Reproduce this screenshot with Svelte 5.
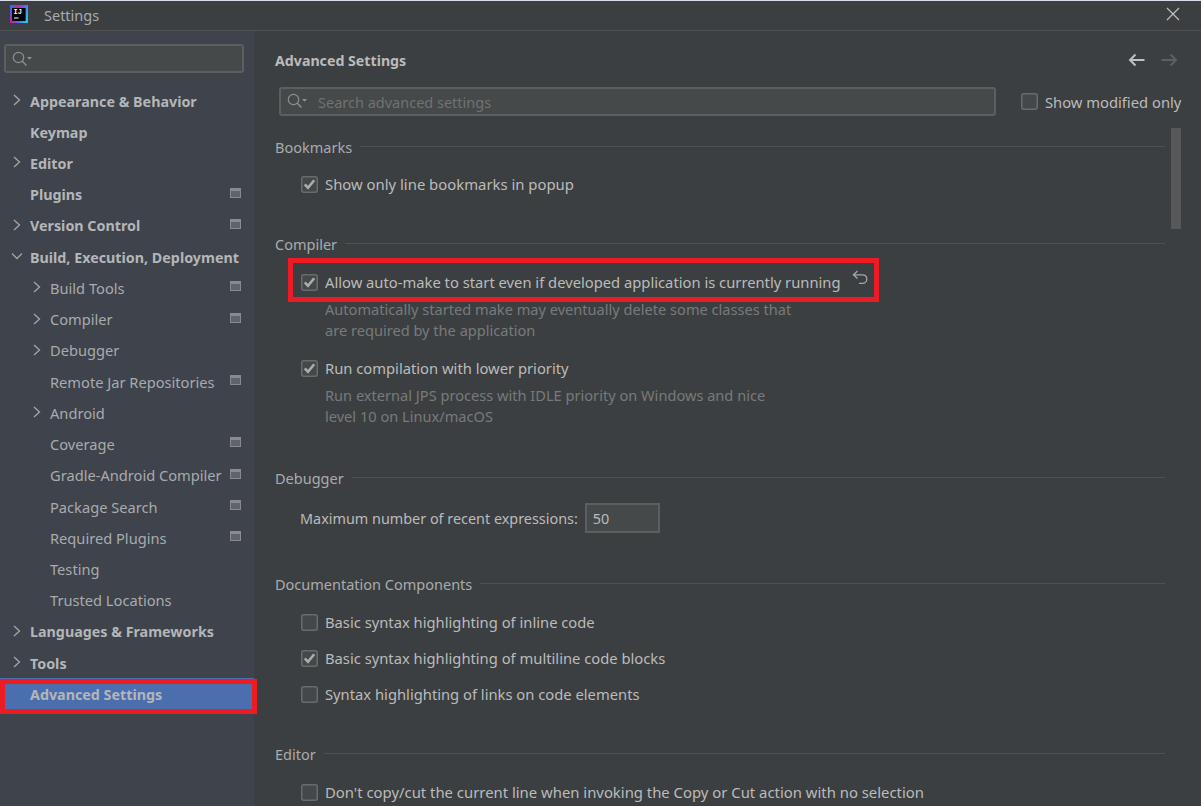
<script>
  const nav = [
    { label: 'Appearance & Behavior', bold: true, arrow: 'right' },
    { label: 'Keymap', bold: true },
    { label: 'Editor', bold: true, arrow: 'right' },
    { label: 'Plugins', bold: true, page: true },
    { label: 'Version Control', bold: true, arrow: 'right', page: true },
    { label: 'Build, Execution, Deployment', bold: true, arrow: 'down' },
    { label: 'Build Tools', arrow: 'right', page: true },
    { label: 'Compiler', arrow: 'right', page: true },
    { label: 'Debugger', arrow: 'right' },
    { label: 'Remote Jar Repositories', page: true },
    { label: 'Android', arrow: 'right' },
    { label: 'Coverage', page: true },
    { label: 'Gradle-Android Compiler', page: true },
    { label: 'Package Search', page: true },
    { label: 'Required Plugins', page: true },
    { label: 'Testing' },
    { label: 'Trusted Locations' },
    { label: 'Languages & Frameworks', bold: true, arrow: 'right' },
    { label: 'Tools', bold: true, arrow: 'right' },
    { label: 'Advanced Settings', bold: true, selected: true }
  ];
</script>

{#snippet checkbox(checked)}
  <svg class="cb" width="17" height="17" viewBox="0 0 17 17">
    <rect x="0.75" y="0.75" width="15.5" height="15.5" rx="2" fill="#43494a" stroke="#6b6b6b" stroke-width="1.5" />
    {#if checked}
      <path d="M3.8 8.3 L7 11.8 L13.2 4.2" fill="none" stroke="#acacac" stroke-width="2.6" />
    {/if}
  </svg>
{/snippet}

{#snippet magnifier()}
  <svg class="mag" width="20" height="16" viewBox="0 0 20 16">
    <circle cx="6.5" cy="6.5" r="5.2" fill="none" stroke="#8c9091" stroke-width="1.2" />
    <path d="M10.3 10.3 L14.5 14.5" stroke="#8c9091" stroke-width="1.4" />
    <path d="M15 6 H20 L17.5 8.8 Z" fill="#8c9091" />
  </svg>
{/snippet}

<div class="window">
  <header class="titlebar">
    <svg class="logo" width="18" height="18" viewBox="0 0 18 18">
      <defs>
        <linearGradient id="lg" x1="0" y1="0.2" x2="1" y2="0.6">
          <stop offset="0" stop-color="#2f6df0" />
          <stop offset="0.3" stop-color="#d0209a" />
          <stop offset="0.6" stop-color="#6f55ee" />
          <stop offset="1" stop-color="#1cc4f4" />
        </linearGradient>
      </defs>
      <rect width="18" height="18" fill="url(#lg)" />
      <rect x="2" y="3" width="13.6" height="13" fill="#000" />
      <text x="3.6" y="9" class="logo-text">IJ</text>
      <rect x="4" y="12.5" width="4.5" height="1" fill="#fff" />
    </svg>
    <span class="title">Settings</span>
    <svg class="close" width="14" height="14" viewBox="0 0 14 14">
      <path d="M1 1 L13 13 M13 1 L1 13" stroke="#c4c4c4" stroke-width="1.1" fill="none" />
    </svg>
  </header>

  <div class="body">
    <aside class="sidebar">
      <div class="side-search">{@render magnifier()}</div>
      <ul class="tree">
        {#each nav as item}
          <li class="row" class:bold={item.bold} class:child={!item.bold} class:selected={item.selected}>
            {#if item.arrow === 'right'}
              <svg class="arrow" width="8" height="12" viewBox="0 0 8 12"><path d="M1 1 L6.5 6 L1 11" fill="none" stroke="#a4a6a8" stroke-width="1.3" /></svg>
            {:else if item.arrow === 'down'}
              <svg class="arrow down" width="12" height="8" viewBox="0 0 12 8"><path d="M1 1.5 L6 6.5 L11 1.5" fill="none" stroke="#a4a6a8" stroke-width="1.3" /></svg>
            {/if}
            <span class="label">{item.label}</span>
            {#if item.page}
              <svg class="page" width="11" height="10" viewBox="0 0 11 10">
                <rect width="11" height="10" fill="#878b90" />
                <rect x="1" y="3" width="9" height="6" fill="#5f646b" />
              </svg>
            {/if}
            {#if item.selected}<span class="red-frame side-frame"></span>{/if}
          </li>
        {/each}
      </ul>
    </aside>

    <main class="main">
      <div class="head">
        <h1>Advanced Settings</h1>
        <div class="nav-arrows">
          <svg width="17" height="14" viewBox="0 0 17 14"><path d="M16.5 7 H2 M7.5 1.5 L2 7 L7.5 12.5" fill="none" stroke="#c0c0c0" stroke-width="2" /></svg>
          <svg width="17" height="14" viewBox="0 0 17 14"><path d="M0.5 7 H15 M9.5 1.5 L15 7 L9.5 12.5" fill="none" stroke="#5d5f60" stroke-width="2" /></svg>
        </div>
      </div>

      <div class="filter">
        <div class="adv-search">
          {@render magnifier()}
          <span class="placeholder">Search advanced settings</span>
        </div>
        <label class="modified">{@render checkbox(false)}<span>Show modified only</span></label>
      </div>

      <section class="bookmarks">
        <div class="sec-title"><span>Bookmarks</span><i></i></div>
        <div class="opt first">{@render checkbox(true)}<span>Show only line bookmarks in popup</span></div>
      </section>

      <section class="compiler">
        <div class="sec-title"><span>Compiler</span><i></i></div>
        <div class="opt first">
          {@render checkbox(true)}<span>Allow auto-make to start even if developed application is currently running</span>
          <svg class="reset" width="16" height="15" viewBox="0 0 16 15">
            <path d="M5.5 1 L1.5 4.8 L5.5 8.5 M1.5 4.8 H10.5 C13 4.8 14.8 6.6 14.8 9 C14.8 11.4 13 13.4 10.5 13.4 H7" fill="none" stroke="#a4a6a8" stroke-width="1.3" />
          </svg>
          <span class="red-frame opt-frame"></span>
        </div>
        <p class="desc">Automatically started make may eventually delete some classes that<br />are required by the application</p>
        <div class="opt run">{@render checkbox(true)}<span>Run compilation with lower priority</span></div>
        <p class="desc">Run external JPS process with IDLE priority on Windows and nice<br />level 10 on Linux/macOS</p>
      </section>

      <section class="debugger">
        <div class="sec-title"><span>Debugger</span><i></i></div>
        <div class="num-row"><span>Maximum number of recent expressions:</span><span class="num">50</span></div>
      </section>

      <section class="docs">
        <div class="sec-title"><span>Documentation Components</span><i></i></div>
        <div class="opt first">{@render checkbox(false)}<span>Basic syntax highlighting of inline code</span></div>
        <div class="opt next">{@render checkbox(true)}<span>Basic syntax highlighting of multiline code blocks</span></div>
        <div class="opt next">{@render checkbox(false)}<span>Syntax highlighting of links on code elements</span></div>
      </section>

      <section class="editor">
        <div class="sec-title"><span>Editor</span><i></i></div>
        <div class="opt first">{@render checkbox(false)}<span>Don't copy/cut the current line when invoking the Copy or Cut action with no selection</span></div>
      </section>

      <div class="scrollbar"></div>
    </main>
  </div>
</div>

<style>
  :global(body) { margin: 0; background: #3c3f41; }
  .window {
    width: 1201px;
    height: 806px;
    overflow: hidden;
    display: flex;
    flex-direction: column;
    background: #3c3f41;
    color: #bbbbbb;
    font-family: "Noto Sans", "Open Sans", sans-serif;
    font-size: 14.75px;
    border-top: 1px solid #d6dce8;
    box-sizing: border-box;
  }
  .titlebar {
    height: 29px;
    flex: none;
    display: flex;
    align-items: center;
    padding: 0 21px 0 10px;
    border-bottom: 1px solid #515151;
    box-sizing: content-box;
    position: relative;
  }
  .logo { margin-top: -3px; }
  .logo-text { font: bold 7px "Liberation Mono", monospace; fill: #fff; }
  .title { margin-left: 16px; margin-top: -1px; color: #a9abad; font-size: 14.5px; }
  .close { margin-left: auto; margin-top: -3px; }
  .body { flex: 1; display: flex; min-height: 0; }

  .sidebar { width: 254px; flex: none; background: #3e434c; }
  .side-search {
    margin: 13px 0 0 4px;
    width: 240px;
    height: 29px;
    box-sizing: border-box;
    background: #45494a;
    border: 2px solid #5b5f60;
    border-radius: 3px;
    display: flex;
    align-items: center;
    padding-left: 6px;
  }
  .tree { list-style: none; margin: 11.9px 0 0; padding: 0; }
  .row {
    height: 31.24px;
    position: relative;
    display: flex;
    align-items: center;
  }
  .row .label { position: absolute; left: 30px; white-space: nowrap; top: 50%; transform: translateY(-50%); }
  .row.child .label { left: 50px; }
  .row.bold { font-weight: 700; color: #b4b6b8; font-size: 14.3px; }
  .row.child { color: #a9abad; font-size: 14.65px; }
  .row.selected { background: #4b6eaf; }
  .arrow { position: absolute; left: 13px; top: 9px; }
  .arrow.down { left: 11px; top: 11px; }
  .row.child .arrow { left: 33px; }
  .page { position: absolute; left: 230px; top: 9px; }

  .red-frame { position: absolute; border: 5px solid #ed1c24; box-sizing: border-box; pointer-events: none; }
  .side-frame { left: 0; top: 1px; width: 257px; height: 35px; }
  .opt-frame { left: 13px; top: -12px; width: 591px; height: 44px; }

  .main { flex: 1; position: relative; padding-left: 21px; padding-right: 36px; min-width: 0; overflow: hidden; }
  .head { height: 20px; margin-top: 19px; display: flex; align-items: center; justify-content: space-between; }
  h1 { font-size: 14.2px; font-weight: 700; margin: 0; color: #bbbbbb; }
  .nav-arrows { display: flex; gap: 16px; margin-right: -13px; }
  .filter { display: flex; align-items: center; margin-top: 16px; padding-left: 4px; height: 30px; }
  .adv-search {
    width: 717px;
    height: 29px;
    flex: none;
    box-sizing: border-box;
    background: #45494a;
    border: 2px solid #5b5f60;
    border-radius: 3px;
    display: flex;
    align-items: center;
    padding-left: 6px;
  }
  .placeholder { margin-left: 11px; margin-top: 1px; color: #6f7273; font-size: 14.5px; }
  .modified { display: flex; align-items: center; gap: 7px; margin-left: 25px; white-space: nowrap; flex: none; }
  .modified span { margin-top: 2px; }

  .sec-title { height: 20px; display: flex; align-items: center; gap: 8px; color: #a9abad; font-size: 14.5px; }
  .sec-title i { flex: 1; height: 1px; background: #4f5152; margin-top: -1px; }
  .bookmarks { margin-top: 21px; }
  .compiler { margin-top: 38px; }
  .debugger { margin-top: 41.5px; }
  .docs { margin-top: 41px; }
  .editor { margin-top: 38px; }
  .bookmarks .opt, .editor .opt { font-size: 14.87px; }

  .opt { height: 24px; display: flex; align-items: center; gap: 7px; padding-left: 26px; position: relative; white-space: nowrap; }
  .opt.first { margin-top: 15px; }
  .opt.next { margin-top: 12px; }
  .opt.run { margin-top: 15.5px; }
  .compiler .opt.first { margin-top: 16px; }
  .docs .opt.first, .editor .opt.first { margin-top: 16px; }
  .cb { flex: none; }
  .reset { position: absolute; left: 577px; top: 0; }
  .desc { margin: 4.5px 0 0 50px; line-height: 21px; color: #787a7b; font-size: 14.6px; }
  .num-row { display: flex; align-items: center; margin: 15px 0 0 25px; height: 30px; gap: 7px; font-size: 14.4px; }
  .num {
    width: 75px;
    height: 30px;
    box-sizing: border-box;
    background: #45494a;
    border: 2px solid #5b5f60;
    padding-left: 6px;
    display: flex;
    align-items: center;
  }
  .scrollbar { position: absolute; left: 917px; top: 97px; width: 10px; height: 101px; background: #565758; }
</style>
